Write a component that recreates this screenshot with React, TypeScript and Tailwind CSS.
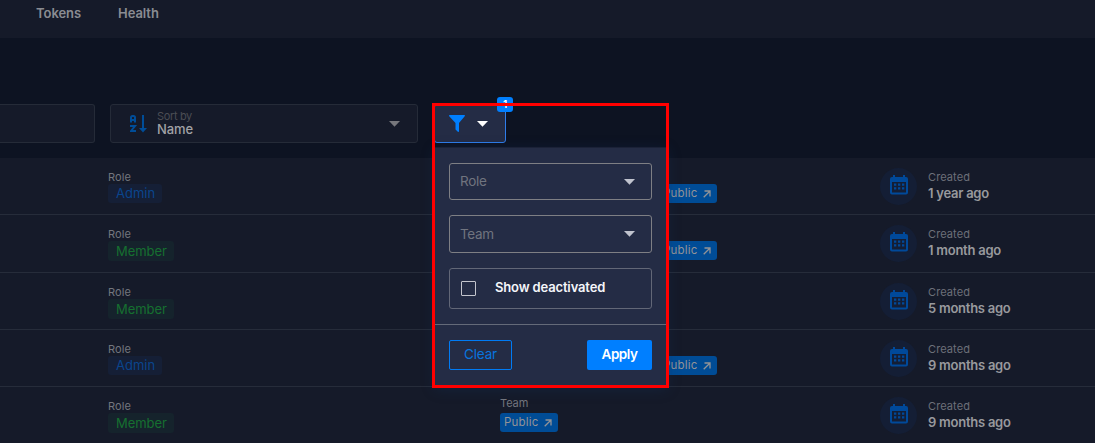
type RowData = { role: 'Admin' | 'Member'; created: string; team?: 'shifted' | 'labelled'; height: string };

const rows: RowData[] = [
  { role: 'Admin', created: '1 year ago', team: 'shifted', height: 'h-[57px]' },
  { role: 'Member', created: '1 month ago', team: 'shifted', height: 'h-[58px]' },
  { role: 'Member', created: '5 months ago', height: 'h-[57px]' },
  { role: 'Admin', created: '9 months ago', team: 'shifted', height: 'h-[57px]' },
  { role: 'Member', created: '9 months ago', team: 'labelled', height: 'h-[57px]' },
];

function Caret({ className }: { className: string }) {
  return (
    <svg viewBox="0 0 11 6" className={`h-[6px] w-[11px] shrink-0 ${className}`} fill="currentColor">
      <path d="M0 0h11L5.500 5.700z" />
    </svg>
  );
}

function CalendarIcon() {
  return (
    <svg viewBox="0 0 18 20" className="h-5 w-[18px] text-[#00499a]" fill="currentColor">
      <path
        fillRule="evenodd"
        d="M3 0h2v2h8V0h2v2h1a2 2 0 0 1 2 2v13.500a2 2 0 0 1-2 2H2a2 2 0 0 1-2-2V4a2 2 0 0 1 2-2h1zM2 7v10.500h14V7z"
      />
      <path d="M4 8.500h2.300v2.300H4zM8 8.500h2.300v2.300H8zM12 8.500h2.300v2.300H12zM4 12.200h2.300v2.300H4zM8 12.200h2.300v2.300H8zM12 12.200h2.300v2.300H12z" />
    </svg>
  );
}

function SortIcon() {
  return (
    <svg viewBox="0 0 17 18" className="h-[18px] w-[17px] text-[#004d98]" fill="none" stroke="currentColor">
      <path strokeWidth="2" d="M1 7.500V2.500Q1 1 2.500 1h1Q5 1 5 2.500v5M1 5h4M0 11h5L1 16h5" />
      <path strokeWidth="2" d="M13 0v14" />
      <path fill="currentColor" stroke="none" d="M9 13h8l-4 4.500z" />
    </svg>
  );
}

function PublicTag() {
  return (
    <span className="flex h-[19px] w-[58px] items-center justify-between rounded-[3px] bg-[#004c96] pl-1 pr-[6px] text-[11.5px] leading-none tracking-[0.2px] text-[#929397]">
      Public
      <svg viewBox="0 0 8 8" className="h-2 w-2" fill="none" stroke="currentColor" strokeWidth="1.3">
        <path d="M.7 7.300 6.800 1.200M1.500 1h5.500v5.500" />
      </svg>
    </span>
  );
}

function MemberRow({ row }: { row: RowData }) {
  return (
    <div
      className={`grid shrink-0 grid-cols-[392px_380px_1fr] border-b border-[#262c3a] pl-[108px] ${row.height}`}
    >
      <div className="flex flex-col items-start pt-[13px]">
        <span className="text-[11px] leading-[13px] tracking-[0.1px] text-[#73767e]">Role</span>
        <span
          className={`flex items-center rounded-[3px] text-[13px] leading-none ${
            row.role === 'Admin'
              ? 'h-[19px] w-[54px] bg-[#151f36] pl-2 text-[#0a458d]'
              : 'h-[20px] w-[66px] bg-[#15232c] pl-2 tracking-[-0.05px] text-[#157030]'
          }`}
        >
          {row.role}
        </span>
      </div>
      <div>
        {row.team === 'shifted' && (
          <div className="flex pl-[159px] pt-[26px]">
            <PublicTag />
          </div>
        )}
        {row.team === 'labelled' && (
          <div className="flex flex-col items-start pt-[10px]">
            <span className="mb-[3px] text-[11px] leading-[13px] tracking-[-0.1px] text-[#73767e]">Team</span>
            <PublicTag />
          </div>
        )}
      </div>
      <div className="flex items-start pt-[10px]">
        <div className="flex h-[37px] w-[37px] items-center justify-center rounded-full bg-[#141e35] pb-[3px]">
          <CalendarIcon />
        </div>
        <div className="ml-[11px] flex flex-col pt-[2px]">
          <span className="text-[11px] leading-[14px] tracking-[0.1px] text-[#6d7079]">Created</span>
          <span className="whitespace-nowrap text-[13px] font-semibold leading-[18px] tracking-[-0.25px] text-[#98999d]">
            {row.created}
          </span>
        </div>
      </div>
    </div>
  );
}

function SelectField({ label, className }: { label: string; className: string }) {
  return (
    <div
      className={`flex items-center justify-between rounded-[3px] border border-[#7e7f84] pl-[10px] pr-[16px] text-[13.5px] tracking-[-0.3px] text-[#70747f] ${className}`}
    >
      {label}
      <Caret className="text-[#c0c3ce]" />
    </div>
  );
}

function FilterMenu() {
  return (
    <div className="absolute left-[435px] top-[147px] flex h-[239px] w-[232px] flex-col border-t border-[#1b2237] bg-[#242c45] shadow-[0_3px_12px_rgba(20,50,90,0.4)]">
      <div className="flex flex-col px-[14px] pt-[15px]">
        <SelectField label="Role" className="h-[37px] w-[203px]" />
        <SelectField label="Team" className="mt-[15px] h-[38px] w-[203px]" />
        <div className="mt-[15px] flex h-[41px] w-[203px] items-center rounded-[3px] border border-[#626777] pl-[11px]">
          <span className="h-[15px] w-[15px] rounded-[1px] border border-[#c3c5cd]" />
          <span className="ml-[19px] pb-px text-[13px] font-semibold tracking-[-0.15px] text-[#f5f6fa]">
            Show deactivated
          </span>
        </div>
      </div>
      <div className="mt-[15px] flex justify-between border-t border-[#646a79] px-[14px] pt-[15px]">
        <button className="h-[30px] w-[63px] rounded-[2px] border border-[#007bf5] pb-[2px] text-[13.500px] tracking-[-0.2px] text-[#0875df]">
          Clear
        </button>
        <button className="mr-px h-[30px] w-[65px] rounded-[2px] bg-[#007fff] pb-px text-[13.500px] font-semibold tracking-[-0.5px] text-white">
          Apply
        </button>
      </div>
    </div>
  );
}

export default function App() {
  return (
    <div className="relative flex h-[443px] w-[1095px] flex-col overflow-hidden bg-[#0d1322] font-['Inter','Liberation_Sans',sans-serif]">
      <nav className="flex h-[38px] shrink-0 bg-[#151a29] pl-9 pt-[4px] text-[13px] font-semibold leading-[19px] tracking-[-0.05px] text-[#8a8c92]">
        <span className="w-[82px]">Tokens</span>
        <span>Health</span>
      </nav>
      <div className="mt-[66px] flex h-[39px] shrink-0">
        <div className="w-[95px] rounded-r-[3px] border border-l-0 border-[#252b38] bg-[#151a29]" />
        <div className="ml-[15px] flex w-[308px] items-center rounded-[3px] border border-[#252b38] bg-[#151a29] pl-[19px] pr-[17px]">
          <SortIcon />
          <div className="ml-[10px] flex flex-1 flex-col">
            <span className="text-[11px] leading-[12px] tracking-[-0.35px] text-[#4b4d54]">Sort by</span>
            <span className="text-[13px] font-medium leading-[15px] tracking-[-0.1px] text-[#a1a2a6]">Name</span>
          </div>
          <Caret className="text-[#76777c]" />
        </div>
        <div className="ml-[16px] flex w-[72px] items-center rounded-[3px] border border-[#2f7deb] bg-[#242c45] pl-[14px]">
          <svg viewBox="0 0 16 17" className="h-[17px] w-4 text-[#007fff]" fill="currentColor">
            <path d="M.5 0h15q.8.3.2 1.200L10 8v8q0 1-.9.900L6.500 14.500V8L.2 1.200Q-.2.300.5 0z" />
          </svg>
          <Caret className="ml-[12px] text-white" />
        </div>
      </div>
      <main className="mt-[15px] flex flex-col bg-[#151a29]">
        {rows.map((row, i) => (
          <MemberRow key={i} row={row} />
        ))}
      </main>
      <FilterMenu />
      <span className="absolute left-[497px] top-[97px] flex h-[15px] w-4 items-center justify-center rounded-[3px] bg-[#007fff] text-[10px] font-semibold text-white">
        1
      </span>
      <div className="absolute left-[432px] top-[103px] h-[285px] w-[237px] border-[3px] border-[#ff0000]" />
    </div>
  );
}
